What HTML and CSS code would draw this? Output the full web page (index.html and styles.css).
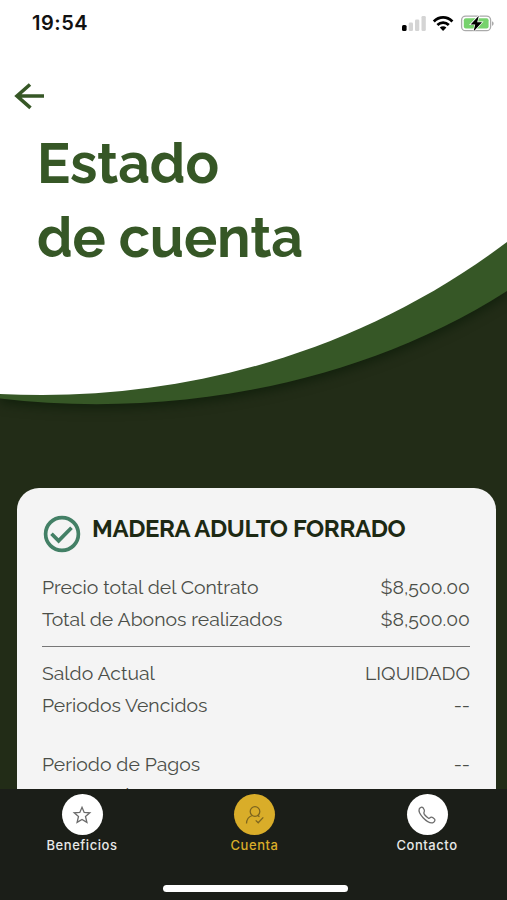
FILE: index.html
```html
<!DOCTYPE html>
<html lang="es">
<head>
    <meta charset="UTF-8">
    <meta name="viewport" content="width=device-width, initial-scale=1.0">
    <title>Estado de cuenta</title>
    <link rel="stylesheet" href="styles.css">
</head>
<body>
    <div class="screen">
        <svg class="wave" viewBox="0 0 507 480" aria-hidden="true">
            <path class="wave-green" d="M0 0H507V291C355 388 165 418 0 398.5Z"/>
            <path class="wave-white" d="M0 0H507V242C353 358 170 403 0 394Z"/>
        </svg>

        <header class="header">
            <div class="status-bar">
                <span class="time">19:54</span>
                <svg class="status-icons" viewBox="0 0 94 20" width="94" height="20" aria-hidden="true">
                    <rect x="2" y="12" width="4.6" height="6" rx="1.5" fill="#000"/>
                    <g fill="#d4d4d4">
                        <rect x="8.7" y="9.5" width="4.3" height="8.5" rx="1.3"/>
                        <rect x="15" y="6.5" width="4.3" height="11.5" rx="1.3"/>
                        <rect x="21.5" y="3" width="4.3" height="15" rx="1.3"/>
                    </g>
                    <g fill="none" stroke="#000" stroke-width="2.8">
                        <path d="M33.8 8.5C39.3 3.1 47 3.1 52.4 8.5"/>
                        <path d="M37.4 12C40.7 8.9 45.5 8.9 48.8 12"/>
                    </g>
                    <path d="M39.8 14.6C41.7 12.9 44.5 12.9 46.4 14.6L43.1 18Z"/>
                    <rect x="61.6" y="3.1" width="29" height="14.6" rx="4" fill="#fff" stroke="#aaa" stroke-width="1.3"/>
                    <rect x="63.8" y="5.2" width="24.8" height="10.4" rx="2" fill="#77d26d"/>
                    <path d="M92 8.2C94.2 9 94.2 12 92 12.8Z" fill="#aaa"/>
                    <path d="M78.8 2.8L70.6 11.4H75.2L73.5 18.4L82 9.2H77.2Z" fill="#000" stroke="#fff" stroke-width="1.4" paint-order="stroke"/>
                </svg>
            </div>
            <a class="back" href="#" aria-label="Volver">
                <svg viewBox="0 0 32 28" width="32" height="28">
                    <path d="M30 14H3M16 2.5L3 14L16.5 25.8"/>
                </svg>
            </a>
            <h1>Estado<br>de cuenta</h1>
        </header>

        <main class="card">
            <div class="card-title">
                <svg viewBox="0 0 38 38" width="38" height="38" aria-hidden="true">
                    <circle cx="19" cy="19" r="16.4"/>
                    <path d="M8.5 18.8L15.6 25.8L28.5 12.7"/>
                </svg>
                <h2>MADERA ADULTO FORRADO</h2>
            </div>
            <div class="row"><span>Precio total del Contrato</span><span>$8,500.00</span></div>
            <div class="row"><span>Total de Abonos realizados</span><span>$8,500.00</span></div>
            <hr>
            <div class="row"><span>Saldo Actual</span><span>LIQUIDADO</span></div>
            <div class="row"><span>Periodos Vencidos</span><span>--</span></div>
            <div class="row gap-top"><span>Periodo de Pagos</span><span>--</span></div>
            <div class="row last"><span>Importe de Pago</span></div>
        </main>

        <nav class="tabbar">
            <a class="tab" href="#">
                <span class="tab-icon">
                    <svg viewBox="0 0 20 20" width="20" height="20"><path d="M10 2.3L12.2 7.4L17.8 7.8L13.5 11.5L14.9 17.4L10 14.4L5.1 17.4L6.5 11.5L2.2 7.8L7.8 7.4Z"/></svg>
                </span>
                <span>Beneficios</span>
            </a>
            <a class="tab active" href="#">
                <span class="tab-icon">
                    <svg viewBox="0 0 20 20" width="20" height="20"><circle cx="10" cy="6.5" r="4.8"/><path d="M1.5 18.5C1.7 14.5 4 11.5 7.3 10.5M12.5 10.4L14.5 11.6M10.7 15.4L13.2 17.8L18.3 12.4"/></svg>
                </span>
                <span>Cuenta</span>
            </a>
            <a class="tab" href="#">
                <span class="tab-icon">
                    <svg viewBox="0 0 20 20" width="20" height="20"><path d="M2.3 3.8C3 2.2 5 1.7 6 2.8C7 4.2 8 5.5 7.3 6.6C6.5 7.8 6.3 8 7.4 9.5C8.8 11.2 10 12.3 11.5 13.2C12.6 13.8 13 12.5 14.2 12.2C15.5 12 16.7 13.2 17.6 14.1C18.6 15.3 17.2 17.4 15.6 17.8C12.8 18.3 8.8 15.5 6.1 12.7C3.8 10.3 1.3 6.5 2.3 3.8Z"/></svg>
                </span>
                <span>Contacto</span>
            </a>
        </nav>
        <div class="home-indicator"></div>
    </div>
</body>
</html>
```

FILE: styles.css
```css
* {
    box-sizing: border-box;
}
body {
    margin: 0;
    font-family: Raleway, Lato, sans-serif;
    background: #222c17;
}
.screen {
    position: relative;
    width: 507px;
    height: 900px;
    overflow: hidden;
    background: #222c17;
}
.wave {
    position: absolute;
    top: 0;
    left: 0;
    width: 507px;
    height: 480px;
}
.wave-green {
    fill: #365726;
    filter: drop-shadow(0 4px 6px rgba(0, 20, 0, 0.5));
}
.wave-white {
    fill: #fff;
}
.header {
    position: relative;
    height: 488px;
}
.status-bar {
    display: flex;
    justify-content: space-between;
    align-items: center;
    height: 46px;
    padding: 0 13px 0 32px;
}
.time {
    font: 600 20px/24px Inter, sans-serif;
    letter-spacing: 0.5px;
    color: #111;
}
.status-icons {
    margin-top: -1px;
}
.back {
    display: block;
    width: 32px;
    height: 28px;
    margin: 36px 0 0 14px;
}
.back svg {
    display: block;
    fill: none;
    stroke: #365726;
    stroke-width: 3.6;
}
h1 {
    margin: 17px 0 0 37px;
    font-size: 55.5px;
    line-height: 74px;
    font-weight: 700;
    letter-spacing: -0.2px;
    color: #365726;
    white-space: nowrap;
}
.card {
    position: relative;
    height: 301px;
    margin: 0 11px 0 17px;
    padding: 27px 26px 0 25px;
    overflow: hidden;
    border-radius: 22px 22px 0 0;
    background: #f4f4f4;
    color: #4b4e48;
}
.card-title {
    display: flex;
    gap: 11px;
    height: 57px;
}
.card-title svg {
    margin: 0 0 0 1px;
    fill: none;
    stroke: #438066;
    stroke-width: 3.7;
}
h2 {
    margin: 0;
    font-size: 24px;
    line-height: 27px;
    font-weight: 700;
    letter-spacing: -0.37px;
    color: #1d2913;
    white-space: nowrap;
}
.row {
    display: flex;
    justify-content: space-between;
    height: 31.5px;
    font-size: 19.4px;
    line-height: 31.5px;
    white-space: nowrap;
}
hr {
    height: 1px;
    margin: 11px 0 11px;
    border: 0;
    background: #777;
}
.gap-top {
    margin-top: 28px;
}
.last {
    margin-top: -1px;
}
.tabbar {
    position: relative;
    display: flex;
    justify-content: space-between;
    height: 111px;
    padding: 5px 30px 0 32px;
    background: #1b1e18;
    font: 500 13px/18px Inter, sans-serif;
    letter-spacing: 0.55px;
}
.tab {
    display: flex;
    flex-direction: column;
    align-items: center;
    width: 100px;
    color: #e8e8e8;
    text-decoration: none;
}
.tab-icon {
    display: flex;
    align-items: center;
    justify-content: center;
    width: 41px;
    height: 41px;
    margin-bottom: 1px;
    border-radius: 50%;
    background: #fff;
}
.tab-icon svg {
    fill: none;
    stroke: #6b6b6b;
    stroke-width: 1.3;
}
.active {
    color: #d9ad29;
}
.active .tab-icon {
    background: #d9ad29;
}
.active svg {
    stroke: #7d651f;
}
.home-indicator {
    position: absolute;
    left: 163px;
    bottom: 8px;
    width: 185px;
    height: 7px;
    border-radius: 4px;
    background: #fff;
}
```
